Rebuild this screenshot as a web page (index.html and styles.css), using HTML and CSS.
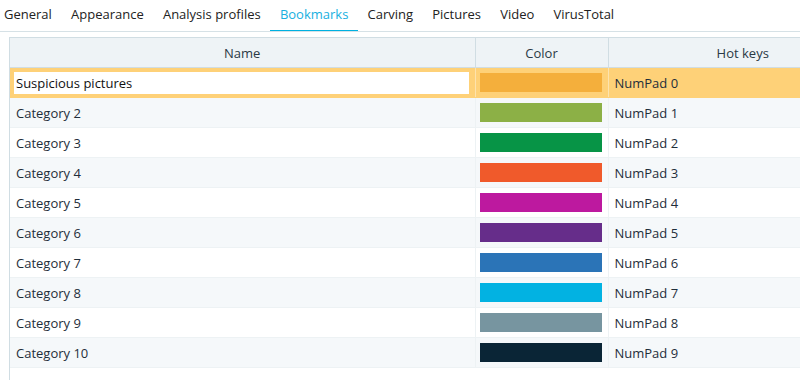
FILE: index.html
```html
<!DOCTYPE html>
<html lang="en">
<head>
  <meta charset="UTF-8">
  <title>Options - Bookmarks</title>
  <link rel="stylesheet" href="styles.css">
</head>
<body>
  <nav class="tabs">
    <span class="tab">General</span>
    <span class="tab">Appearance</span>
    <span class="tab">Analysis profiles</span>
    <span class="tab active">Bookmarks</span>
    <span class="tab">Carving</span>
    <span class="tab">Pictures</span>
    <span class="tab">Video</span>
    <span class="tab">VirusTotal</span>
  </nav>

  <div class="grid-wrap">
    <table class="grid">
      <colgroup>
        <col class="col-name">
        <col class="col-color">
        <col class="col-keys">
      </colgroup>
      <thead>
        <tr><th>Name</th><th>Color</th><th>Hot keys</th></tr>
      </thead>
      <tbody>
        <tr class="selected">
          <td><input class="edit" type="text" value="Suspicious pictures"></td>
          <td><div class="swatch" style="background:#f4af3c"></div></td>
          <td>NumPad 0</td>
        </tr>
        <tr>
          <td>Category 2</td>
          <td><div class="swatch" style="background:#8cb046"></div></td>
          <td>NumPad 1</td>
        </tr>
        <tr>
          <td>Category 3</td>
          <td><div class="swatch" style="background:#079446"></div></td>
          <td>NumPad 2</td>
        </tr>
        <tr>
          <td>Category 4</td>
          <td><div class="swatch" style="background:#f05a2b"></div></td>
          <td>NumPad 3</td>
        </tr>
        <tr>
          <td>Category 5</td>
          <td><div class="swatch" style="background:#bd199f"></div></td>
          <td>NumPad 4</td>
        </tr>
        <tr>
          <td>Category 6</td>
          <td><div class="swatch" style="background:#662d8a"></div></td>
          <td>NumPad 5</td>
        </tr>
        <tr>
          <td>Category 7</td>
          <td><div class="swatch" style="background:#2b74b7"></div></td>
          <td>NumPad 6</td>
        </tr>
        <tr>
          <td>Category 8</td>
          <td><div class="swatch" style="background:#02b2e2"></div></td>
          <td>NumPad 7</td>
        </tr>
        <tr>
          <td>Category 9</td>
          <td><div class="swatch" style="background:#7795a0"></div></td>
          <td>NumPad 8</td>
        </tr>
        <tr>
          <td>Category 10</td>
          <td><div class="swatch" style="background:#0a2536"></div></td>
          <td>NumPad 9</td>
        </tr>
      </tbody>
    </table>
  </div>
</body>
</html>
```

FILE: styles.css
```css
/* General Styling */
html {
  font-family: "Open Sans", "Noto Sans", sans-serif;
  font-size: 13px;
  color: #1f2e3a;
}
body {
  margin: 0;
  width: 800px;
  height: 380px;
  overflow: hidden;
  background: #fff;
}

/* Tabs */
.tabs {
  display: flex;
  height: 31px;
  border-bottom: 1px solid #d6e1e6;
  padding-left: 4px;
  overflow: hidden;
}
.tab {
  padding: 4px 9.6px 0;
  line-height: 21px;
  color: #222;
  border-bottom: 3px solid transparent;
  margin-bottom: -1px;
  box-sizing: border-box;
  height: 33px;
}
.tab:first-child {
  padding-left: 0;
}
.tab.active {
  color: #17b0df;
  border-bottom-color: #00b1e1;
}

/* Grid */
.grid-wrap {
  margin: 5px 0 0 9px;
  width: 791px;
  height: 343px;
  overflow: hidden;
  border-left: 1px solid #d0dde3;
}
.grid {
  border-collapse: collapse;
  table-layout: fixed;
  width: 867px;
}
.col-name {
  width: 465px;
}
.col-color {
  width: 133px;
}
.col-keys {
  width: 269px;
}
.grid th {
  height: 29px;
  padding: 0;
  font-weight: normal;
  color: #2a3945;
  background: #eef3f6;
  border-top: 1px solid #d0dde3;
  border-bottom: 1px solid #d0dde3;
  border-left: 1px solid #d0dde3;
}
.grid th:first-child {
  border-left: none;
}
.grid td {
  height: 29px;
  padding: 0 0 0 6px;
  border-bottom: 1px solid #edf2f4;
  border-left: 1px solid #edf2f4;
  white-space: nowrap;
}
.grid td:first-child {
  border-left: none;
}
.grid td:nth-child(2) {
  padding-left: 4px;
}
.grid tbody tr:nth-child(even) {
  background: #f5f8fa;
}
.grid tr.selected {
  background: #fed178;
}
.grid tr.selected td {
  border-bottom-color: #fed178;
  border-left-color: #fde3ad;
}
.grid tr.selected td:first-child {
  padding-left: 4px;
}
.edit {
  display: block;
  box-sizing: border-box;
  width: 455px;
  height: 22px;
  margin: 0;
  padding: 0 2px;
  border: none;
  outline: none;
  font: inherit;
  color: #111;
  background: #fff;
}
.swatch {
  width: 122px;
  height: 19px;
}
```
